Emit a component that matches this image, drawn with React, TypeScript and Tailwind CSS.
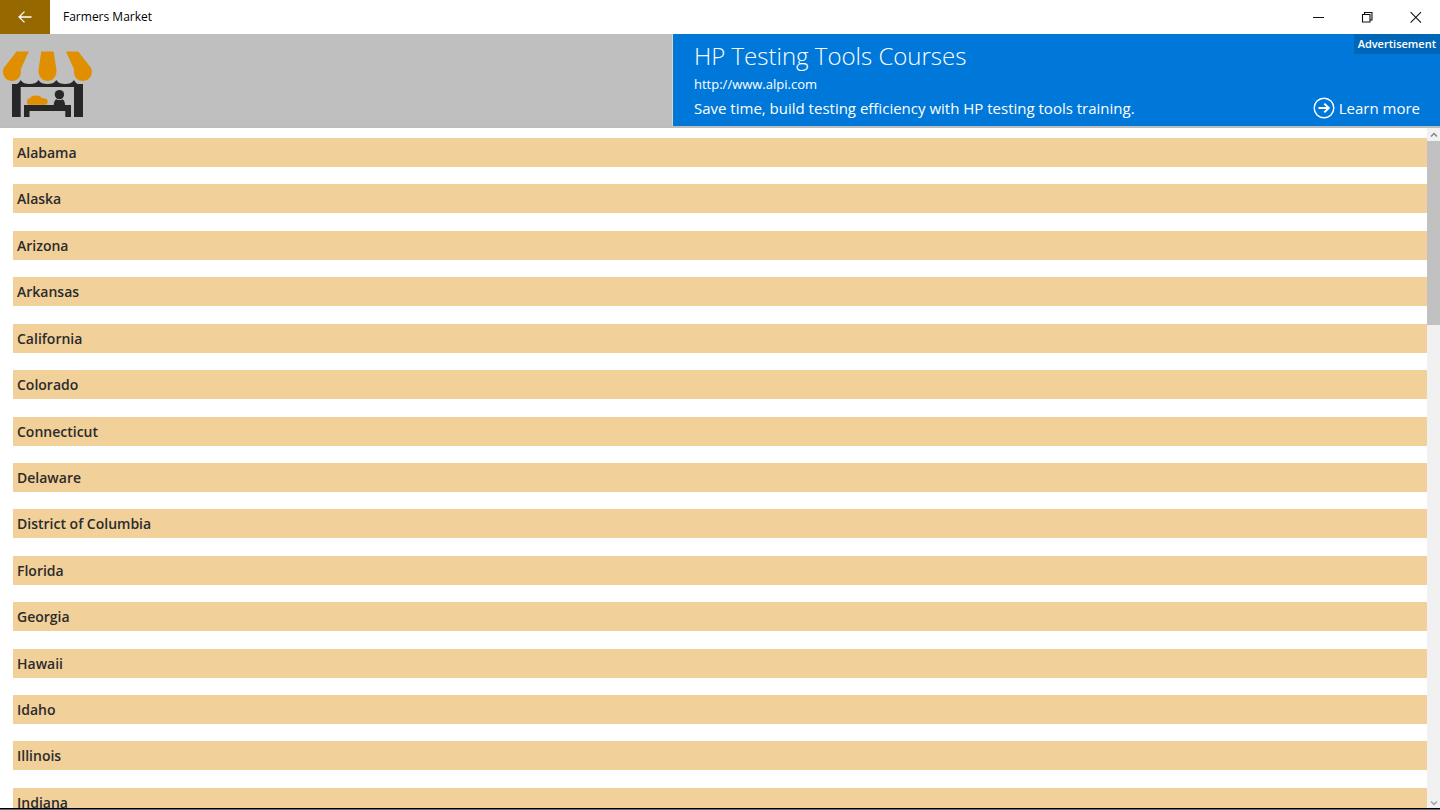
const states = [
  'Alabama',
  'Alaska',
  'Arizona',
  'Arkansas',
  'California',
  'Colorado',
  'Connecticut',
  'Delaware',
  'District of Columbia',
  'Florida',
  'Georgia',
  'Hawaii',
  'Idaho',
  'Illinois',
  'Indiana',
];

function TitleBar() {
  return (
    <div className="flex h-[34px] shrink-0 items-stretch bg-white">
      <button aria-label="Back" className="flex w-[50px] items-center justify-center bg-[#966800]">
        <svg width="14" height="12" viewBox="0 0 14 12" fill="none" stroke="#fff" strokeWidth="1.3">
          <path d="M13.5 6H1M6.5 .6L1 6l5.5 5.4" />
        </svg>
      </button>
      <h1 className="flex-1 self-center pl-[13px] text-[12px] leading-4 text-black">Farmers Market</h1>
      <button aria-label="Minimize" className="flex w-12 items-center justify-center">
        <svg width="12" height="12" viewBox="0 0 12 12" stroke="#111" strokeWidth="1">
          <path d="M0 6.5h11" />
        </svg>
      </button>
      <button aria-label="Restore" className="flex w-12 items-center justify-center">
        <svg width="12" height="12" viewBox="0 0 12 12" fill="none" stroke="#111" strokeWidth="1.1">
          <path d="M1.500 3.500h7.500v7.500h-7.500zM3.500 3.500v-2h7.500v7.500h-2" />
        </svg>
      </button>
      <button aria-label="Close" className="flex w-[49px] items-center justify-center">
        <svg width="12" height="12" viewBox="0 0 12 12" stroke="#111" strokeWidth="1.1">
          <path d="M.6 1.200l10.400 10.400M11 1.200L.6 11.600" />
        </svg>
      </button>
    </div>
  );
}

function MarketLogo() {
  return (
    <svg width="100" height="92" viewBox="0 0 100 92" role="img" aria-label="Farmers Market stall">
      <g fill="#e08f00">
        <path d="M28.800 17.500H16.600L4.100 33.500c-.8 1.200-1.200 2.600-1.200 4.300a9 9 0 0 0 18 .6V35z" />
        <path d="M41.300 17.500h12.300L56.500 36c0 7.500-4 11-9 11s-9-3.500-9-11z" />
        <path d="M66 17.500h12.200l12.500 16c.8 1.200 1.200 2.600 1.200 4.300a9 9 0 0 1-18 .6V35z" />
        <path d="M27 67.500c0-2 1.500-3.500 3.500-3.500 0-1.500 1.500-2.600 5-2.600s6 .8 6.300 3c3-.6 5.900.8 5.900 2.900 0 1.500-.8 3-2 3.500H28c-.7-.8-1-2-1-3.300z" />
      </g>
      <g fill="#272727">
        <path d="M12 50h5c1.600-.8 2.800-2.200 3.700-4 1.800 3 5 4 8.800 4s7.200-1 9-4c1.800 3 5 4 8.900 4s7.100-1 8.900-4c1.800 3 5 4 8.800 4s7-1 8.900-4c.9 1.800 2.100 3.200 3.700 4H83v33h-9V53H20.700v30H12z" />
        <path d="M24 71h47v12h-5.700v-6H29.500v6H24z" />
        <circle cx="59.400" cy="60.600" r="4.700" />
        <path d="M53.700 72c0-3.500.8-5.500 2.500-6.800 2 1.200 4.500 1.200 6.400 0 1.700 1.300 2.500 3.300 2.500 6.800z" />
      </g>
    </svg>
  );
}

function Advertisement() {
  return (
    <aside className="relative flex w-[768px] shrink-0 flex-col border-l border-[#dcd9b8] bg-[#0078d9] pl-[21px] text-white">
      <span className="absolute top-0 right-0 bg-[#0067b8] px-1 text-[11px] leading-5 font-semibold">
        Advertisement
      </span>
      <h2 className="pt-1 text-[24px] leading-9 font-light">HP Testing Tools Courses</h2>
      <a href="http://www.alpi.com" className="self-start text-[13px] leading-5">
        http://www.alpi.com
      </a>
      <div className="flex items-center justify-between pr-5 text-[15px] leading-7">
        <p>Save time, build testing efficiency with HP testing tools training.</p>
        <a href="http://www.alpi.com" className="flex items-center gap-1">
          <svg width="22" height="22" viewBox="0 0 22 22" fill="none" stroke="#fff">
            <circle cx="11" cy="11" r="9.800" strokeWidth="1.400" />
            <path d="M5.500 11h10M11.300 6.600L15.800 11l-4.500 4.400" strokeWidth="2" />
          </svg>
          Learn more
        </a>
      </div>
    </aside>
  );
}

function ScrollBar() {
  return (
    <div className="flex w-[13px] shrink-0 flex-col bg-[#f1f1f1]">
      <button aria-label="Scroll up" className="flex h-[13px] items-center justify-center">
        <svg width="8" height="6" viewBox="0 0 8 6" fill="none" stroke="#808080" strokeWidth="1.400">
          <path d="M1 4.500l3-3 3 3" />
        </svg>
      </button>
      <div className="flex-1">
        <div className="h-[28%] bg-[#c1c1c1]" />
      </div>
      <button aria-label="Scroll down" className="flex h-[11px] items-center justify-center">
        <svg width="8" height="6" viewBox="0 0 8 6" fill="none" stroke="#a0a0a0" strokeWidth="1.400">
          <path d="M1 1.500l3 3 3-3" />
        </svg>
      </button>
    </div>
  );
}

export default function App() {
  return (
    <div className="flex h-screen flex-col overflow-hidden bg-white font-['Open_Sans','Noto_Sans',sans-serif]">
      <TitleBar />
      <header className="flex shrink-0 justify-between border-b-2 border-[#bcbcbc] bg-[#bfbfbf]">
        <MarketLogo />
        <Advertisement />
      </header>
      <main className="flex min-h-0 flex-1 overflow-hidden">
        <ul className="-mb-[9px] flex flex-1 flex-col justify-between pt-[10px] pl-[13px]">
          {states.map((name) => (
            <li key={name} className="shrink-0 bg-[#f1d09a]">
              <a
                href={`#${name}`}
                className="block px-1 pt-px text-[14px] leading-7 font-semibold text-[#2b2b2b]"
              >
                {name}
              </a>
            </li>
          ))}
        </ul>
        <ScrollBar />
      </main>
      <div className="flex h-[2px] shrink-0 border-t border-black bg-[#6b6b6b]" />
    </div>
  );
}
